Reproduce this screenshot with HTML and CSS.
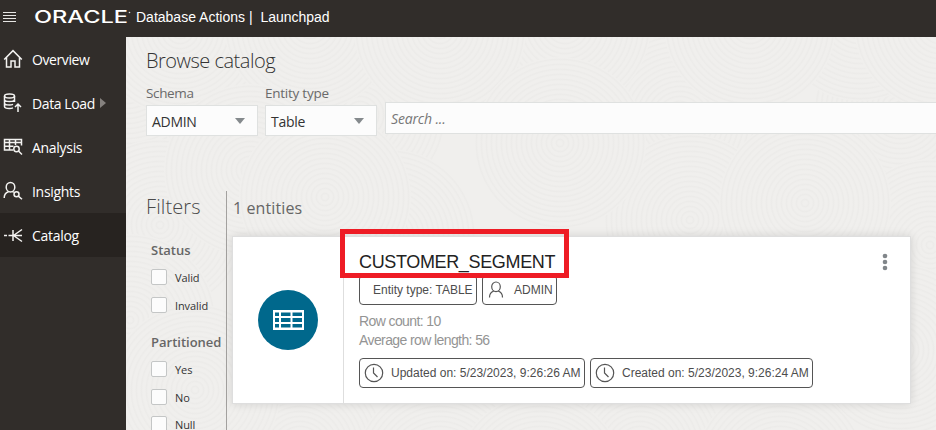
FILE: index.html
```
<!DOCTYPE html>
<html lang="en">
<head>
<meta charset="utf-8">
<title>Database Actions | Launchpad</title>
<link rel="stylesheet" href="styles.css">
</head>
<body>
<header class="topbar">
  <svg class="menu" width="13" height="12" viewBox="0 0 13 12" stroke="#e6e5e3" stroke-width="1"><path d="M0 .5h13M0 3.5h13M0 6.5h13M0 9.5h13"/></svg>
  <svg class="logo" width="97" height="20" viewBox="0 0 97 20"><text class="logo-text" x="-1" y="16" textLength="94" lengthAdjust="spacingAndGlyphs">ORACLE</text><circle cx="94.500" cy="5.500" r=".8" fill="#ddd"/></svg>
  <span class="product">Database Actions</span><span class="bar">|</span><span class="page">Launchpad</span>
</header>
<div class="body">
  <nav class="sidebar">
    <a class="item"><svg class="ico" viewBox="0 0 20 20"><path d="M1.2 10.5 10 1.6l8.800 8.900M3.500 8.500v9.500h4.500v-6h4v6h4.500V8.500"/></svg><span class="t1">Overview</span></a>
    <a class="item"><svg class="ico" viewBox="0 0 20 20"><ellipse cx="6.500" cy="3" rx="5" ry="2"/><path d="M1.500 3v10.500c0 1.200 2 2 5 2 1.500 0 2.500-.2 3.500-.6M11.500 3v6M1.500 6.500c0 1.200 2 2 5 2s5-.8 5-2M1.500 10c0 1.200 2 2 5 2 1.500 0 2.500-.2 3.500-.6M15 19v-8M12 14l3-3 3 3"/></svg><span class="t2">Data Load</span><i class="arrow"></i></a>
    <a class="item"><svg class="ico" viewBox="0 0 20 20"><path d="M10 13H1.500V2.500h17v6M1.500 5.500h17M1.500 9.200h9M6.500 2.500V13M12.500 2.500V8"/><circle cx="13.500" cy="12" r="2.700"/><path d="m15.500 14 3.500 3.500"/></svg><span class="t3">Analysis</span></a>
    <a class="item"><svg class="ico" viewBox="0 0 20 20"><ellipse cx="7.500" cy="6.200" rx="4.300" ry="4.700"/><path d="M5.500 10.800C2.700 11.800 1.200 14 1.200 17M9.500 10.500l1.200.8"/><circle cx="13.500" cy="13.300" r="2.500"/><path d="m15.300 15.100 3.700 3.200"/></svg><span class="t4">Insights</span></a>
    <a class="item active"><svg class="ico" viewBox="0 0 20 20"><path d="M1 10.500h3M5.500 10.500h13.500M10 5v11M10.500 10.500l8.500-6M10.500 10.500l8.500 6"/></svg><span class="t5">Catalog</span></a>
  </nav>
  <main class="main">
    <svg class="texture" width="810" height="393" viewBox="126 37 810 393">
      <defs>
        <radialGradient id="r1" gradientUnits="userSpaceOnUse" cx="0" cy="0" r="5" spreadMethod="repeat"><stop offset="0" stop-color="#f0efed"/><stop offset=".4" stop-color="#f0efed"/><stop offset=".75" stop-color="#ecebe9"/><stop offset="1" stop-color="#f0efed"/></radialGradient>
        <circle id="disc" r="86" fill="url(#r1)"/>
      </defs>
      <use href="#disc" x="126" y="70"/><use href="#disc" x="245" y="100"/><use href="#disc" x="360" y="115"/><use href="#disc" x="680" y="120"/><use href="#disc" x="900" y="110"/>
      <use href="#disc" x="180" y="30"/><use href="#disc" x="310" y="25"/><use href="#disc" x="565" y="25"/><use href="#disc" x="440" y="30"/><use href="#disc" x="860" y="15"/><use href="#disc" x="750" y="25"/><use href="#disc" x="940" y="25"/>
      <use href="#disc" x="160" y="225"/><use href="#disc" x="250" y="170"/><use href="#disc" x="390" y="235"/><use href="#disc" x="690" y="220"/><use href="#disc" x="930" y="245"/>
      <use href="#disc" x="325" y="197"/><use href="#disc" x="560" y="143"/><use href="#disc" x="805" y="203"/>
      <use href="#disc" x="300" y="450"/><use href="#disc" x="440" y="470"/><use href="#disc" x="640" y="450"/><use href="#disc" x="900" y="350"/><use href="#disc" x="540" y="480"/><use href="#disc" x="780" y="470"/>
      <use href="#disc" x="130" y="320"/><use href="#disc" x="195" y="390"/>
    </svg>
    <div class="content">
      <h1 class="title">Browse catalog</h1>
      <div class="controls">
        <div class="field schema"><label>Schema</label><div class="select"><span>ADMIN</span><i></i></div></div>
        <div class="field entity"><label>Entity type</label><div class="select"><span>Table</span><i></i></div></div>
        <div class="search"><span>Search ...</span></div>
      </div>
      <div class="lower">
        <aside class="filters">
          <h2>Filters</h2>
          <h3 class="h-status">Status</h3>
          <div class="check"><i></i><span class="valid">Valid</span></div>
          <div class="check"><i></i><span class="invalid">Invalid</span></div>
          <h3 class="h-part">Partitioned</h3>
          <div class="check"><i></i><span class="yes">Yes</span></div>
          <div class="check"><i></i><span class="no">No</span></div>
          <div class="check"><i></i><span class="null">Null</span></div>
        </aside>
        <section class="results">
          <div class="count">1 entities</div>
          <article class="card">
            <div class="card-icon"><div class="round"><svg width="31" height="20" viewBox="0 0 31 20"><path d="M0 0h31v20H0z" fill="#fff"/><path fill="#00688c" d="M2 2.500h4V6H2zM8 2.500h9.500V6H8zM19.500 2.500h9.500V6h-9.500zM2 8h4v4H2zM8 8h9.500v4H8zM19.500 8h9.500v4h-9.500zM2 14h4v3.500H2zM8 14h9.500v3.500H8zM19.500 14h9.500v3.500h-9.500z"/></svg></div></div>
            <div class="card-body">
              <div class="name"><span>CUSTOMER_SEGMENT</span><div class="highlight"></div></div>
              <div class="tags top"><div class="tag type"><span>Entity type: TABLE</span></div><div class="tag owner"><svg width="16" height="18" viewBox="0 0 16 18"><ellipse cx="8" cy="5.800" rx="4.300" ry="4.800"/><path d="M1.500 16.500c0-3.500 1.500-5.500 4.300-6.500M14.500 16.500c0-3.500-1.500-5.500-4.300-6.500"/></svg><span>ADMIN</span></div></div>
              <p>Row count: 10</p>
              <p>Average row length: 56</p>
              <div class="tags bottom"><div class="tag date"><svg width="20" height="20" viewBox="0 0 20 20"><circle cx="10" cy="10" r="8.700"/><path d="M9.500 4.500V10l4 4"/></svg><span>Updated on: 5/23/2023, 9:26:26 AM</span></div><div class="tag date created"><svg width="20" height="20" viewBox="0 0 20 20"><circle cx="10" cy="10" r="8.700"/><path d="M9.500 4.500V10l4 4"/></svg><span>Created on: 5/23/2023, 9:26:24 AM</span></div></div>
            </div>
            <svg class="kebab" width="6" height="18" viewBox="0 0 6 18" fill="#81868a"><circle cx="3" cy="3" r="2.300"/><circle cx="3" cy="9" r="2.300"/><circle cx="3" cy="15" r="2.300"/></svg>
          </article>
        </section>
      </div>
    </div>
  </main>
</div>
</body>
</html>
```
FILE: styles.css
```
* { box-sizing: border-box; }
body { margin: 0; width: 936px; height: 430px; overflow: hidden; font-family: "Open Sans", "Noto Sans", sans-serif; color: #333; }
h1, h2, h3, p { margin: 0; font-weight: 400; }
span, label { white-space: nowrap; }
.topbar { height: 37px; background: #312d2a; color: #fff; display: flex; align-items: center; font: 14px/18px "Liberation Sans", sans-serif; padding: 0 0 3px 3px; }
.menu { margin-right: 19px; margin-top: 2px; }
.logo { margin-right: 4px; overflow: visible; }
.logo-text { font: 500 17px "Inter", sans-serif; fill: #fff; }
.page { letter-spacing: -.05px; }
.bar { margin: 0 8px 0 4px; }
.body { display: flex; height: 393px; }
.sidebar { width: 126px; flex: none; background: #312d2a; }
.item { height: 44px; display: flex; align-items: center; padding: 2px 0 0 3px; color: #fff; font-size: 14px; line-height: 20px; }
.item.active { background: #272320; }
.ico { width: 20px; height: 20px; margin: -2px 9px 0 0; fill: none; stroke: #f4f3f1; stroke-width: 1.5; flex: none; }
.t1, .t2, .t3, .t4, .t5 { letter-spacing: -.4px; }
.t3, .t4, .t5 { letter-spacing: -.3px; }
.arrow { border: solid transparent; border-width: 5px 0 5px 6px; border-left-color: #85817e; margin: -3px 0 0 5px; }
.main { flex: 1; background: #f0efed; position: relative; overflow: hidden; }
.texture { position: absolute; inset: 0; }
.content { position: relative; padding-left: 20px; }
.title { font-size: 20px; line-height: 28px; padding-top: 10px; height: 46px; font-weight: 350; letter-spacing: -.5px; }
.controls { display: flex; height: 108px; }
.field { width: 112px; margin-right: 7px; }
.field label { display: block; height: 22px; line-height: 20px; font-size: 13.500px; color: #6a6a6a; letter-spacing: -.25px; }
.field.schema label { letter-spacing: -.35px; }
.select { height: 31px; border: 1px solid #dfe1e0; background: #fcfcfc; display: flex; align-items: center; justify-content: space-between; padding: 2px 12px 0 5px; font-size: 14px; }
.select span { letter-spacing: -.3px; }
.select i { border: solid transparent; border-width: 6px 5px 0; border-top-color: #858a8d; margin-top: -2px; }
.entity { margin-right: 8px; }
.search { flex: 1; height: 32px; margin-top: 19px; border: 1px solid #dfe1e0; border-right: 0; background: #fcfcfc; padding-left: 5px; line-height: 32px; font-size: 14px; font-style: italic; color: #777; }
.search span { letter-spacing: -.15px; }
.lower { display: flex; height: 300px; }
.filters { width: 81px; border-right: 1px solid #a3a19f; padding-left: 5px; flex: none; }
.filters h2 { margin-left: -5px; height: 49px; line-height: 31px; font-size: 20px; font-weight: 350; color: #4a4a4a; letter-spacing: .1px; }
.filters h3 { height: 24px; line-height: 20px; font-size: 13px; font-weight: 600; color: #666; white-space: nowrap; }
.filters .h-part { margin-top: 13px; }
.check { display: flex; height: 27.500px; align-items: flex-start; font-size: 11px; }
.check i { width: 16px; height: 16px; border: 1px solid #c4c6c6; border-radius: 2px; background: #fcfcfc; margin-top: 5px; }
.check span { margin-left: 8px; line-height: 15px; margin-top: 6px; letter-spacing: -.1px; }
.results { padding-left: 5px; flex: 1; }
.count { padding-left: 1px; height: 45px; line-height: 34px; font-size: 16px; color: #666; letter-spacing: .1px; }
.card { width: 679px; height: 168px; background: #fff; border: 1px solid #dedede; box-shadow: 0 0 9px rgba(0,0,0,.12); display: flex; position: relative; font-family: "Liberation Sans", sans-serif; }
.card-icon { width: 111px; border-right: 1px solid #dedede; display: flex; align-items: center; justify-content: center; }
.round { width: 60px; height: 60px; border-radius: 50%; background: #00688c; display: flex; align-items: center; justify-content: center; }
.card-body { padding-left: 15px; }
.name { position: relative; height: 38px; padding-top: 14px; font-size: 18px; line-height: 22px; color: #222; letter-spacing: -.35px; }
.highlight { position: absolute; left: -19px; top: -8px; width: 229px; height: 49px; border: 5px solid #ee1c25; z-index: 2; }
.tags { display: flex; gap: 5px; }
.tag { height: 30px; border: 1px solid #555; border-radius: 4px; display: flex; align-items: center; font-size: 12px; color: #4d4d4d; }
.tag svg { fill: none; stroke: #555; stroke-width: 1.200; }
.type { width: 118px; padding-left: 13px; }
.owner { width: 75px; padding-left: 5px; }
.owner span { margin-left: 10px; }
.top { margin-bottom: 7px; }
.card-body p { font-size: 14px; line-height: 19px; color: #949494; letter-spacing: -.6px; }
.bottom { margin-top: 8px; }
.date { width: 226px; padding-left: 4px; }
.created { width: 223px; }
.date span { margin-left: 7px; }
.kebab { position: absolute; right: 22px; top: 16px; }
```
